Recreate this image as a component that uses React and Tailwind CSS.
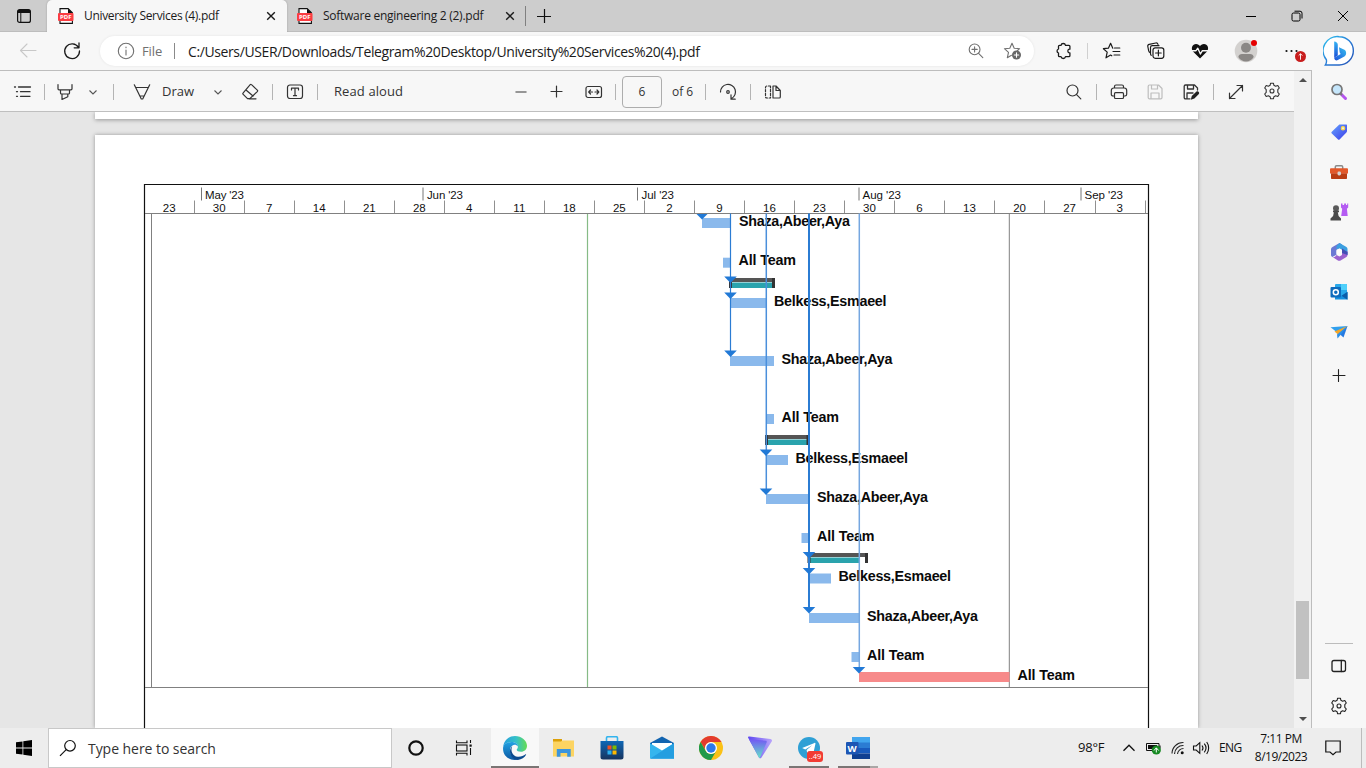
import React from "react";

const UI = "font-['Open_Sans','Noto_Sans',sans-serif]";

/* 20-unit line icon */
function I({ children, className = "", w = 1.1, fill = "none" }) {
  return (
    <svg viewBox="0 0 20 20" className={"h-5 w-5 shrink-0 " + className} fill={fill} stroke="currentColor" strokeWidth={w} strokeLinecap="round" strokeLinejoin="round">
      {children}
    </svg>
  );
}

function Sep({ className = "" }) {
  return <div className={"h-4 w-px shrink-0 bg-[#b4b4b4] " + className} />;
}

function Chevron({ className = "" }) {
  return (
    <svg viewBox="0 0 12 12" className={"h-3 w-3 shrink-0 text-[#555] " + className} fill="none" stroke="currentColor" strokeWidth="1.1">
      <path d="M2.5 4.5 6 8l3.500-3.500" />
    </svg>
  );
}

function PdfIcon({ className = "" }) {
  return (
    <svg viewBox="0 0 16 16" className={"h-4 w-4 shrink-0 " + className}>
      <path d="M2 .6h8.200L14.400 4.800v10.600H2z" fill="#fff" stroke="#111" strokeWidth="1.1" />
      <path d="M10 .5v4.500h4.500z" fill="#111" />
      <rect x="0" y="5" width="15.500" height="8" rx="1" fill="#fb3d42" />
      <text x="7.800" y="11.300" textAnchor="middle" fill="#fff" fontSize="6" fontWeight="700" fontFamily="Open Sans, sans-serif" textLength="11.500">PDF</text>
    </svg>
  );
}

function Cross({ className = "" }) {
  return (
    <svg viewBox="0 0 10 10" className={"h-[10px] w-[10px] shrink-0 " + className} fill="none" stroke="#1a1a1a" strokeWidth="1.4">
      <path d="m1.200 1.200 7.600 7.600m0-7.600L1.200 8.800" />
    </svg>
  );
}

function Gear({ className = "" }) {
  return (
    <I className={className}>
      <circle cx="10" cy="10" r="2" />
      <path d="M8.600 2.200h2.800l.5 2.100 1.700.9 2.200-.7 1.500 2.500-1.500 1.700v2.600l1.500 1.700-1.500 2.500-2.200-.7-1.700.9-.5 2.100H8.600l-.5-2.100-1.700-.9-2.200.7L2.700 13l1.500-1.700V8.700L2.700 7l1.500-2.500 2.200.7 1.700-.9z" />
    </I>
  );
}

function TabStrip() {
  return (
    <div className="flex h-8 shrink-0 items-center bg-[#cdcdcd] shadow-[inset_0_-1px_0_#bdbdbd]">
      <div className="flex w-[47px] justify-center">
        <svg viewBox="0 0 14 14" className="h-[14px] w-[14px]" fill="none" stroke="#111">
          <rect x=".6" y=".6" width="12.800" height="12.800" rx="2" strokeWidth="1.200" />
          <path d="M1 2.500h12" strokeWidth="3" />
          <path d="M3.800 4v9.400" />
        </svg>
      </div>
      <div className="flex h-8 w-[240px] items-center rounded-t-[5px] bg-[#f7f7f7] shadow-[0_0_2px_rgba(0,0,0,0.25)]">
        <PdfIcon className="ml-[11px]" />
        <span className="ml-[10px] w-[170px] whitespace-nowrap text-[12px] tracking-[-0.32px] text-[#1b1b1b]">University Services (4).pdf</span>
        <Cross className="ml-[12px]" />
      </div>
      <PdfIcon className="ml-[10px]" />
      <span className="ml-[10px] w-[172px] whitespace-nowrap text-[12px] tracking-[-0.26px] text-[#1b1b1b]">Software engineering 2 (2).pdf</span>
      <Cross className="ml-[10px]" />
      <div className="ml-[10px] h-5 w-px bg-[#808080]" />
      <svg viewBox="0 0 14 14" className="ml-[11px] h-[14px] w-[14px]" stroke="#111" strokeWidth="1.200"><path d="M7.500 0v14M0 7.500h14" /></svg>
      <div className="ml-auto mr-[17px] flex items-center gap-[34px]">
        <svg viewBox="0 0 12 12" className="h-3 w-3" stroke="#000"><path d="M1 6.500h10" /></svg>
        <svg viewBox="0 0 12 12" className="h-3 w-3" fill="none" stroke="#000"><rect x="1" y="3" width="8" height="8" rx="1.500" /><path d="M3.500 1.200h5.500a2 2 0 0 1 2 2v5.300" /></svg>
        <svg viewBox="0 0 12 12" className="h-3 w-3" stroke="#000"><path d="m1 1 10 10M11 1 1 11" /></svg>
      </div>
    </div>
  );
}

function BingIcon({ className = "" }) {
  return (
    <svg viewBox="0 0 32 32" className={"h-8 w-8 shrink-0 " + className}>
      <defs>
        <linearGradient id="bo" x1="0" y1="0" x2="1" y2="1"><stop offset="0" stopColor="#2cc3ee" /><stop offset=".5" stopColor="#2a7fd8" /><stop offset="1" stopColor="#2450b4" /></linearGradient>
        <linearGradient id="bb" x1="0" y1="0" x2="0" y2="1"><stop offset="0" stopColor="#35b4f4" /><stop offset="1" stopColor="#1b4fd6" /></linearGradient>
        <linearGradient id="bc" x1="0" y1="1" x2="1" y2="0"><stop offset="0" stopColor="#1f52da" /><stop offset="1" stopColor="#35c0f0" /></linearGradient>
      </defs>
      <path d="M16.200 1.700a14 14 0 1 1 0 28.300H2.400c1-1.400 1.300-3.200 1-5.200A14.200 14.200 0 0 1 16.200 1.700z" fill="#fff" stroke="url(#bo)" strokeWidth="1.400" />
      <path d="m16 12.200 5.400 2.500c2.200 1 2.500 5.200 0 6.700l-6.600 3.700c-1.700.9-3.600-.4-3.600-2.400l6.500-3.700-1-1.500z" fill="url(#bc)" />
      <path d="M11.200 6.500c1.900 0 3.600 1.300 3.600 3.500v10.500l-3.600 2.200z" fill="url(#bb)" />
    </svg>
  );
}

function AddressRow() {
  return (
    <div className="flex h-[38px] shrink-0 items-center bg-[#f7f7f7] text-[#1b1b1b]">
      <I className="ml-[18px] text-[#c8c8c8]"><path d="M18 9.500H2.500M9 3 2.500 9.500 9 16" /></I>
      <I className="ml-6" w={1.300}><path d="M16.500 6.500A7.400 7.400 0 1 0 17.500 10M17 2v4.800h-4.800" /></I>
      <div className="ml-[18px] flex h-[30px] w-[934px] items-center rounded-full bg-white shadow-[0_0_3px_rgba(0,0,0,0.08)]">
        <I className="ml-4 text-[#707070]"><circle cx="10" cy="10" r="7.700" /><path d="M10 9v5M10 6.100v.6" /></I>
        <span className="ml-[6px] w-[26px] pt-px text-[13px] tracking-[-0.1px] text-[#707070]">File</span>
        <div className="ml-[6px] h-4 w-px bg-[#8a8a8a]" />
        <span className="ml-[13px] whitespace-nowrap text-[14px] tracking-[-0.39px]">C:/Users/USER/Downloads/Telegram%20Desktop/University%20Services%20(4).pdf</span>
        <I className="ml-auto text-[#707070]"><circle cx="8.600" cy="8.400" r="5.400" /><path d="m12.600 12.400 4.200 4.200M6 8.400h5.200M8.600 5.800V11" /></I>
        <I className="ml-4 mr-3 text-[#707070]">
          <path d="m10 2.200 2.200 5 5.400.5-4 3.600M10 2.200l-2.200 5-5.400.5 4.100 3.600-1.200 5.500 4.200-2.500" />
          <circle cx="14.500" cy="14" r="4.500" fill="#666" stroke="none" /><path d="M14.500 11.800v4.400M12.300 14h4.400" stroke="#fff" />
        </I>
      </div>
      <I className="ml-5" w={1.300}><path d="M7 4.300a2.300 2.300 0 0 1 4.500 0h3.400c.6 0 1 .4 1 1v2.900c-1.600-.1-2 .8-2 1.800s.4 1.900 2 1.800v2.900c0 .6-.4 1-1 1h-3.400a2.300 2.300 0 0 1-4.500 0H5.500c-.6 0-1-.4-1-1V12a2.100 2.100 0 0 1 0-4V5.300c0-.6.4-1 1-1z" /></I>
      <Sep className="ml-[13px] bg-[#d0d0d0]" />
      <I className="ml-[14px]" w={1.200}><path d="M10.800 7.200 8.600 2.300 6.400 7.200l-5 .5 3.800 3.400L4 16.800l4.600-2.700 1.200.7M12.500 7h5.300M11 10.500h6.800M12 14h5.800" /></I>
      <I className="ml-6" w={1.200}><path d="M4.300 11.700c-1-.3-1.400-1-1.600-1.800L1.800 5.500c-.2-1 .3-2 1.400-2.200L9.800 2c1-.2 1.900.4 2.200 1.400M5.200 14.300c-.5-.5-.7-1-.7-1.600V6.500c0-1.100.7-1.800 1.800-1.800H13" /><rect x="7" y="6.800" width="10.800" height="10.500" rx="2.200" fill="#f7f7f7" /><path d="M12.400 9.200v5.600M9.600 12h5.600" /></I>
      <I className="ml-6" w={1.200}><path d="M10 17.500 3 10.500C.5 7.300 2.500 3 6 3c2 0 3.200 1 4 2.200C10.800 4 12 3 14 3c3.500 0 5.500 4.300 3 7.500z" fill="#111" stroke="none" /><path d="M1 9.700h5l1.800-2.500 2.600 5.800 2-3.300H19" stroke="#f7f7f7" strokeWidth="1.400" /></I>
      <div className="relative ml-6 h-6 w-6">
        <svg viewBox="0 0 24 24" className="h-6 w-6"><circle cx="12" cy="12" r="11.300" fill="#d3d1cf" /><circle cx="12" cy="8.700" r="5" fill="#8a8785" /><path d="M4.300 18c.3-1.800 1.700-3 3.700-3h8c2 0 3.400 1.200 3.700 3-1.700 2.800-4.500 4.500-7.700 4.500S6 20.800 4.300 18z" fill="#8a8785" /></svg>
        <div className="absolute left-[17px] top-[1px] h-[6px] w-[6px] rounded-full bg-[#e50000]" />
      </div>
      <div className="relative ml-6 h-6 w-6">
        <svg viewBox="0 0 24 24" className="h-6 w-6" fill="#111"><circle cx="4.500" cy="12" r="1.100" /><circle cx="9.500" cy="12" r="1.100" /><circle cx="14.500" cy="12" r="1.100" /></svg>
        <svg viewBox="0 0 12 12" className="absolute left-[13px] top-[12px] h-[11px] w-[11px]"><circle cx="6" cy="6" r="6" fill="#c81e1e" /><path d="M6 9.500V3M4 5l2-2 2 2" stroke="#fff" fill="none" /></svg>
      </div>
      <BingIcon className="ml-[17px]" />
    </div>
  );
}

function PdfToolbar() {
  return (
    <div className="flex h-[41px] shrink-0 items-center border-b border-[#bfbfbf] bg-[#f7f7f7] pt-px text-[#333]">
      <I className="ml-3" w={1.300}><path d="M6.500 5h12M8.500 9.700h9.500M8.500 14.300h9.500M2.500 5h1M4.500 9.700h1M4.500 14.300h1" /></I>
      <Sep className="ml-3" />
      <I className="ml-[10px]" w={1.200}><path d="M3 2.500v4.300c0 .7.400 1 1 1h12c.6 0 1-.300 1-1V2.500M5.500 8v3c0 .7.400 1 1 1h7c.6 0 1-.300 1-1V8M7 12v5.500l5.800-2.800V12" /></I>
      <Chevron className="ml-3" />
      <Sep className="ml-[14px]" />
      <I className="ml-[18px]" w={1.200}><path d="m2.300 2.800 7 14.200h1.400l7-14.200M3.800 5.500h12.400M8 14h4" /></I>
      <span className="ml-[10px] w-10 text-[13px]">Draw</span>
      <Chevron className="ml-[10px]" />
      <I className="ml-4" w={1.200}><path d="m11.500 2.600 5.800 5.500c.5.500.5 1 0 1.500l-7.500 7H7.500l-4.300-4.200c-.5-.5-.5-1 0-1.500l7-8.300c.4-.4.9-.4 1.300 0zM6 8l7 6M9 16.800h7" /></I>
      <Sep className="ml-3" />
      <I className="ml-3" w={1.200}><rect x="2.500" y="3" width="15" height="13.500" rx="2.500" /><path d="M6.500 8V6.200h7V8M10 6.200v7.500M8.500 13.700h3" /></I>
      <Sep className="ml-3" />
      <span className="ml-4 w-20 whitespace-nowrap text-[13px] tracking-[0.1px]">Read aloud</span>
      <I className="ml-[97px] text-[#777]" w={1.500}><path d="M5 10h10" /></I>
      <I className="ml-[15px]" w={1.200}><path d="M5 9.500h11M10.500 4v11" /></I>
      <I className="ml-[18px]" w={1.200}><rect x="2" y="4.500" width="15.500" height="11" rx="2" /><path d="M5 10h3.500M11 10h3.500M6.500 8 4.700 10l1.800 2M13 8l1.800 2-1.800 2" /></I>
      <Sep className="ml-[11px]" />
      <div className="ml-[6px] flex h-8 w-10 items-center justify-center rounded-sm border border-[#adadad] text-[12px]">6</div>
      <span className="ml-[10px] w-6 whitespace-nowrap text-[12px]">of 6</span>
      <Sep className="ml-[9px]" />
      <I className="ml-3" w={1.200}><circle cx="10" cy="10" r="1.300" /><path d="M2.500 10A7.500 7.500 0 1 1 13.500 16.500M13 12.800v4.400h4.200" /></I>
      <Sep className="ml-3" />
      <I className="ml-3" w={1.200}><path d="M10 4v12h6.300c.6 0 1-.4 1-1V8.500L13 4zM13 4v4.500h4.300" /><path d="M7.500 4H4c-1 0-1.500.5-1.500 1.500v9c0 1 .5 1.500 1.500 1.500h3.500z" strokeDasharray="2.200 1.600" /></I>
      <I className="ml-[281px]" w={1.200}><circle cx="8.500" cy="8.500" r="5.500" /><path d="m12.600 12.600 4.200 4.200" /></I>
      <Sep className="ml-3" />
      <I className="ml-3" w={1.200}><path d="M5.500 6V4.500c0-1 .5-1.500 1.500-1.500h6c1 0 1.500.5 1.500 1.500V6M5.500 14H4c-1 0-1.700-.7-1.700-1.700V8.500C2.300 7 3.300 6 4.800 6h10.400c1.500 0 2.500 1 2.500 2.500v3.800c0 1-.7 1.700-1.700 1.700h-1.500" /><rect x="5.500" y="10.700" width="9" height="5.800" rx="1" /></I>
      <I className="ml-4 text-[#bdbdbd]" w={1.200}><path d="M4.500 3h9l3.500 3.500v9c0 .8-.5 1.300-1.300 1.300H4.500c-.8 0-1.300-.5-1.300-1.300V4.300C3.200 3.500 3.700 3 4.500 3zM6.500 3v4h6V3M6 16.800V11h8v5.800" /></I>
      <I className="ml-4" w={1.300}><path d="M9 16.800H4.500c-.8 0-1.300-.5-1.300-1.300V4.300C3.200 3.500 3.700 3 4.500 3h9L16.500 6v2M6.500 3v4h6V3M6 16.800V11h6" /><path d="m9.800 17.700 1-3.700 4.700-4.500c1.500-1 3.400.9 2.400 2.400L13.400 16.500z" fill="#222" stroke="none" /></I>
      <Sep className="ml-3" />
      <I className="ml-3" w={1.200}><path d="M3.500 16.500 16.500 3.500M11 3.500h5.500V9M3.500 11v5.500H9" /></I>
      <Gear className="-mt-[2px] ml-4" />
    </div>
  );
}

const weeks = ["23", "30", "7", "14", "21", "28", "4", "11", "18", "25", "2", "9", "16", "23", "30", "6", "13", "20", "27", "3"];
const months = [[201.5, "May '23", 205, 39], [423, "Jun '23", 427, 36], [637.5, "Jul '23", 641.5, 32.5], [859, "Aug '23", 862.5, 38.5], [1081, "Sep '23", 1084.5, 38.5]];
const bars = [
  [702, 731, 218, "Shaza,Abeer,Aya", 739, 226],
  [723, 731, 257.7, "All Team", 738.5, 265],
  [731, 766, 298, "Belkess,Esmaeel", 774, 306],
  [730, 774, 356, "Shaza,Abeer,Aya", 781.5, 364],
  [766, 774, 414, "All Team", 781.5, 422],
  [766, 788, 455, "Belkess,Esmaeel", 795.5, 463],
  [766, 809, 494, "Shaza,Abeer,Aya", 817, 502],
  [801.500, 809, 533, "All Team", 817, 541],
  [809, 831, 573.5, "Belkess,Esmaeel", 838.5, 581],
  [809, 859.5, 613, "Shaza,Abeer,Aya", 867, 621],
  [851.5, 859.5, 652, "All Team", 867, 660],
  [859, 1009.5, 672, "All Team", 1017.5, 680],
];
const widths = { "Shaza,Abeer,Aya": 111, "All Team": 57.5, "Belkess,Esmaeel": 112.5 };
const summaries = [[730, 774.500, 774, 278], [766, 809, 809, 435], [808.500, 867.500, 859.5, 553]];
const arrows = [[702, 213], [730.500, 276.500], [730.500, 292.500], [730.500, 350.500], [766, 449.500], [766, 488.500], [809, 552], [809, 568], [809, 607], [859, 667]];

function Gantt() {
  return (
    <svg viewBox="95 135 1103 593" className="block h-[593px] w-[1103px]" fontFamily="Liberation Sans, Arial, sans-serif">
      <path d="M144.500 740V184.500H1148.500V740" fill="none" stroke="#111" strokeWidth="1.200" />
      <g stroke="#777" strokeWidth="1">
        <path d="M145 213.500H1148M145 687.500H1148M151.500 213V687M1009.300 213V687" stroke="#808080" />
        <path d="M587.500 214V687" stroke="#86bb86" strokeWidth="1.200" />
        {weeks.map((_, i) => <path key={i} d={`M${Math.floor(194.3 + i * 50.04) + 0.5} 200.500V213`} stroke="#909090" />)}
        {months.map(([x]) => <path key={x} d={`M${x} 187.500V200.500`} />)}
      </g>
      <g fontSize="11.500" fill="#111">
        {weeks.map((w, i) => <text key={i} x={169.200 + i * 50.02} y="212" textAnchor="middle">{w}</text>)}
        {months.map(([x, t, tx, len]) => <text key={x} x={tx} y="199" textLength={len}>{t}</text>)}
      </g>
      {bars.map(([a, b, y, t, tx, ty], i) => (
        <g key={i}>
          <rect x={a} y={y} width={b - a} height="10" fill={i === 11 ? "#f78a8a" : "#8ab9ec"} />
          <text x={tx} y={ty} fontSize="14.300" fontWeight="700" fill="#0a0a0a" textLength={widths[t]}>{t}</text>
        </g>
      ))}
      {summaries.map(([a, b, c, y]) => (
        <g key={y}>
          <rect x={a} y={y} width={b - a} height="4" fill="#555" />
          <rect x={a} y={y + 4.500} width={c - a} height="5.500" fill="#2aa3ad" />
          <rect x={a - 1} y={y} width="3" height="10" fill="#333" />
          <rect x={b - 2.500} y={y} width="3" height="10" fill="#333" />
        </g>
      ))}
      <path d="M730.500 213.500V352" stroke="#2b7cd3" strokeWidth="1.200" />
      <path d="M766.300 213.500V490" stroke="#4a8fdb" strokeWidth="1.500" />
      <path d="M809 213.500V609" stroke="#2b7cd3" strokeWidth="2" />
      <path d="M859.300 213.500V668" stroke="#76a7e0" strokeWidth="1.500" />
      {arrows.map(([x, y], i) => <path key={i} d={i === 0 ? "M696.500 214h11l-5.500 5.500z" : `M${x - 6.300} ${y}h12.600l-6.300 6.500z`} fill="#2179d6" />)}
    </svg>
  );
}

function Viewer() {
  return (
    <div className="flex min-w-0 flex-1 flex-col">
      <PdfToolbar />
      <div className="flex flex-1 flex-col items-start overflow-hidden bg-[#e6e6e6]">
        <div className="ml-[95px] h-[7px] w-[1103px] shrink-0 bg-white shadow-[0_1px_4px_rgba(0,0,0,0.35)]" />
        <div className="ml-[95px] mt-4 h-[593px] w-[1103px] shrink-0 bg-white shadow-[0_0_4px_rgba(0,0,0,0.35)]"><Gantt /></div>
      </div>
    </div>
  );
}

function ScrollBar() {
  return (
    <div className="flex w-[18px] shrink-0 flex-col items-center border-r border-[#bdbdbd] bg-[#f1f1f1]">
      <svg viewBox="0 0 8 4" className="mt-[7px] h-1 w-2"><path d="M0 4 4 0l4 4z" fill="#4f4f4f" /></svg>
      <div className="mt-[519px] h-[78px] w-[13px] bg-[#c1c1c1]" />
      <svg viewBox="0 0 8 4" className="mt-[38px] h-1 w-2"><path d="M0 0l4 4 4-4z" fill="#4f4f4f" /></svg>
    </div>
  );
}

function SideBar() {
  return (
    <div className="flex w-[54px] shrink-0 flex-col items-center bg-[#f7f7f7] pt-[12px] text-[#222]">
      <div className="flex flex-col gap-5">
        <svg viewBox="0 0 20 20" className="h-5 w-5"><path d="m11.500 11.500 5 5" stroke="#b455ee" strokeWidth="3" strokeLinecap="round" /><path d="m11 11 2 2" stroke="#777" strokeWidth="2" /><circle cx="8" cy="7.500" r="5" fill="#c5e6fb" stroke="#777" strokeWidth="1.700" /></svg>
        <svg viewBox="0 0 20 20" className="h-5 w-5"><defs><linearGradient id="tg" x1="0" y1="0" x2="1" y2="1"><stop offset="0" stopColor="#65a3ff" /><stop offset="1" stopColor="#3c3ce8" /></linearGradient></defs><path d="M11 2.500h6c.8 0 1 .4 1 1V9c0 .6-.2 1-.6 1.400l-6.600 6.800c-.7.7-1.400.7-2 0l-6-5.700c-.6-.6-.6-1.200 0-1.800l7-6.700c.3-.4.700-.5 1.200-.5z" fill="url(#tg)" /><circle cx="14" cy="6.300" r="1.700" fill="#e8e8f4" stroke="#fbd740" strokeWidth="1.200" /></svg>
        <svg viewBox="0 0 20 20" className="h-5 w-5"><path d="M6.300 7V5c0-.8.4-1.300 1.200-1.300h5c.8 0 1.200.5 1.200 1.300v2" fill="none" stroke="#8a8a8a" strokeWidth="1.500" /><rect x="1" y="6.300" width="18" height="5.500" rx="1" fill="#e2582a" /><path d="M2 11.500h16V16c0 .7-.3 1-1 1H3c-.7 0-1-.3-1-1z" fill="#b93d14" /><rect x="8.500" y="9.500" width="3.500" height="4" rx="1.400" fill="#d4d4d4" /></svg>
        <svg viewBox="0 0 20 20" className="h-5 w-5"><path d="M12 1.500h1.500v1.400h1.600V1.500H17v1.400h1.200V1.500h1v4l-1.300 1.300.8 7.200h-6.500l1-7.200L12 5.500z" fill="#b45cf2" /><circle cx="7" cy="6.300" r="3" fill="#5a5a5a" /><path d="M4 8.500h6v1.700H8.800l.8 3.800 2.400 2.500v2H1.500v-2l2.600-2.500.8-3.800H4z" fill="#4a4a4a" /></svg>
        <svg viewBox="0 0 20 20" className="h-5 w-5"><path d="M10.500 1 3.500 5C2.500 5.600 2 6.400 2 7.500v5.300c0 1 .4 1.700 1.300 2.200l4.200-2.200V7.700L13 4.800V2.500z" fill="#6a78d4" /><path d="M10.500 1 17 4.700c1 .6 1.500 1.400 1.500 2.500v5.600l-5.500-2V7.700L10.300 6.200 7.500 7.500V4z" fill="#3b9fe0" /><path d="M18.500 9.500v3.300c0 1.100-.5 1.900-1.500 2.500l-5 3c-1.300.7-2.300.7-3.500 0l-5-3.200c2 .5 3-.5 4-2.100l3 1.500 2.500-1.500V8z" fill="#9b62cf" /><path d="M13 6.500 18.500 10v3L13 11z" fill="#4250b5" /><path d="m10.200 6.800 2.800 1.600v3.300l-2.800 1.500-2.700-1.500V8.400z" fill="#fbfbfb" /></svg>
        <svg viewBox="0 0 20 20" className="h-5 w-5"><rect x="6" y="2" width="12" height="12" rx="1" fill="#28a8ea" /><path d="M12 2h5c.6 0 1 .4 1 1v5h-6z" fill="#50d0fb" /><path d="M6 17.500V11l6 3 6.500-4v7.500z" fill="#1490df" /><path d="m18.500 9.700-6 4 6 4z" fill="#0b5ca9" /><rect x="1.500" y="5" width="10.500" height="10.500" rx="1" fill="#0f6cbd" /><circle cx="6.800" cy="10.200" r="2.500" fill="none" stroke="#fff" strokeWidth="1.500" /></svg>
        <svg viewBox="0 0 20 20" className="h-5 w-5"><path d="M1.500 5.200 18.500 4 9 11z" fill="#31a0ed" /><path d="M18.500 4 14.500 15.500l-5-4.500z" fill="#2579e1" /><path d="m18.500 4-13 5.500 3.500 3z" fill="#f4a62a" /><path d="m8 12.500.5 4 3-3.500 7-9z" fill="#2b8fe8" /></svg>
      </div>
      <I className="mt-[24px]"><path d="M4 9.500h12M9.500 3.500v12" /></I>
      <div className="mt-[257px] h-px w-7 shrink-0 bg-[#bcbcbc]" />
      <I className="mt-[12px]" w={1.300}><rect x="3" y="4.500" width="13.500" height="11" rx="2" /><path d="M12.300 4.500v11" /></I>
      <Gear className="mt-5" />
    </div>
  );
}

function TaskBar() {
  return (
    <div className="flex h-10 shrink-0 items-center bg-[#ededed] text-[#111] [&>*]:shrink-0">
      <svg viewBox="0 0 16 16" className="ml-4 h-4 w-4"><path d="M0 2.300 6.500 1.400v6.200H0zM7.300 1.300 16 0v7.600H7.300zM0 8.400h6.500v6.200L0 13.700zM7.300 8.400H16V16l-8.700-1.200z" /></svg>
      <div className="ml-4 flex h-10 w-[344px] items-center border border-[#c8c8c8] bg-white">
        <svg viewBox="0 0 18 18" className="ml-[10px] h-[18px] w-[18px]" fill="none" stroke="#111" strokeWidth="1.200"><circle cx="11" cy="6.800" r="5.300" /><path d="M7.200 10.600 1 16.800" /></svg>
        <span className="ml-[11px] whitespace-nowrap text-[14px] tracking-[-0.05px] text-[#333]">Type here to search</span>
      </div>
      <svg viewBox="0 0 16 16" className="ml-4 h-4 w-4"><circle cx="8" cy="8" r="6.700" fill="none" stroke="#111" strokeWidth="2.200" /></svg>
      <svg viewBox="0 0 18 18" className="ml-[31px] h-[18px] w-[18px]" fill="none" stroke="#111" strokeWidth="1.100"><path d="M1.500 1.500v2.300h10.500V1.500M1.500 16.500v-2.300h10.500v2.300M15.500 1v3M15.500 9v7" /><rect x="1.500" y="6" width="10.500" height="6" /><rect x="14.500" y="5.500" width="2.200" height="2.200" fill="#111" stroke="none" /></svg>
      <div className="ml-[18px] flex h-10 w-12 items-center justify-center border-b-2 border-[#7a7574] bg-[#f8f8f8] pt-[2px]">
        <svg viewBox="0 0 24 24" className="h-6 w-6">
          <defs>
            <linearGradient id="e1" x1="0" y1="0" x2="1" y2="0"><stop offset="0" stopColor="#279fdc" /><stop offset=".55" stopColor="#35c1c8" /><stop offset="1" stopColor="#66dc52" /></linearGradient>
            <linearGradient id="e2" x1="0" y1="0" x2="0" y2="1"><stop offset="0" stopColor="#23a2e2" /><stop offset="1" stopColor="#0c59a4" /></linearGradient>
          </defs>
          <path d="M.2 11C.7 5 5.500 0 12 0s12 4.700 12 9.800c0 3.700-2.700 6-6 6-2.800 0-4.300-1-4.300-2 0-.8 1.200-1.200 1.200-3.300C14.900 8 12 6 8.500 6 4.200 6 1 8.500.2 11z" fill="url(#e1)" />
          <path d="M.1 11.500C.6 8.300 4 6 8.500 6c3.500 0 6.400 2 6.400 4.500C14 9 12.500 8.600 11.500 8.700 8.500 9 6.800 12 7 15c.3 4.400 3.500 7.800 8 8.500C7 25.500-.7 20 .1 11.500z" fill="url(#e2)" />
          <path d="M9.200 10.200C7.300 14 9 20.300 15 20.800c3 .2 5.500-1 7.600-2.500.4-.200.7.100.5.500C21.500 21.600 18.500 23.500 15 24 9.500 23.800 6.800 19 7 15c.2-2.200 1-3.800 2.200-4.800z" fill="#0b4a8f" />
        </svg>
      </div>
      <svg viewBox="0 0 22 20" className="ml-[14px] h-5 w-[22px]"><path d="M0 1h9v4H0z" fill="#dca008" /><path d="M0 3.500h8l1.500-1H21v16H0z" fill="#fcd462" /><path d="M3.800 18.800V11h13.900v7.800h-3.500V15H7.500v3.800z" fill="#3b95dd" /></svg>
      <svg viewBox="0 0 24 24" className="ml-[25px] h-6 w-6"><defs><linearGradient id="st" x1="0" y1="0" x2="0" y2="1"><stop offset="0" stopColor="#0f67b5" /><stop offset="1" stopColor="#17345f" /></linearGradient></defs><path d="M6.500 6V2c0-.8.5-1.300 1.300-1.300h8.400c.8 0 1.300.500 1.300 1.300v4" fill="none" stroke="#33b4ee" strokeWidth="1.600" /><path d="M.5 5h23v16c0 1.700-.8 2.500-2.500 2.500H3C1.300 23.500.5 22.700.5 21z" fill="url(#st)" /><path d="M7.500 9.500h4v4h-4z" fill="#f25022" /><path d="M12.500 9.500h4v4h-4z" fill="#7fba00" /><path d="M7.500 14.500h4v4h-4z" fill="#2bafee" /><path d="M12.500 14.500h4v4h-4z" fill="#ffb900" /></svg>
      <svg viewBox="0 0 24 24" className="ml-[26px] h-6 w-6"><path d="M0 7 12 .5 24 7v8H0z" fill="#1264b0" /><path d="M2 7h20v8H2z" fill="#fff" /><path d="M0 7.200 12 14.500V22.500H0zM24 7.200 12 14.500V22.500h12z" fill="#35b5ee" /><path d="M0 22.700 24 7.200v15.500z" fill="#249ee0" /></svg>
      <svg viewBox="0 0 24 24" className="ml-[25px] h-6 w-6"><circle cx="12" cy="12" r="12" fill="#fbc116" /><path d="M1.600 6A12 12 0 0 1 22.400 6H12a6 6 0 0 0-5.500 8z" fill="#e33b2e" /><path d="M1.600 6A12 12 0 0 0 12 24l5.200-9a6 6 0 0 1-10.400 0z" fill="#229a4b" /><circle cx="12" cy="12" r="6" fill="#fff" /><circle cx="12" cy="12" r="4.700" fill="#2f79ea" /></svg>
      <svg viewBox="0 0 24 24" className="ml-[25px] h-6 w-6"><defs><linearGradient id="pv" x1="0" y1="0" x2="1" y2="0"><stop offset="0" stopColor="#5d47f0" /><stop offset="1" stopColor="#b9a5fb" /></linearGradient><linearGradient id="pw" x1="0" y1="0" x2="0" y2="1"><stop offset="0" stopColor="#7357f4" /><stop offset="1" stopColor="#64e3c8" /></linearGradient></defs><path d="M0 1.500c0-.8.7-1 1.500-.9l21 2.300c1.400.2 1.900 1.500 1.200 2.700L13.500 21.500c-.8 1.200-2 1.100-2.600-.1z" fill="url(#pv)" /><path d="m1 3.200 16.500 1.500c1.200.1 1.600 1 1 2L12 21.500c-.5.5-1 .2-1.200-.3z" fill="url(#pw)" /></svg>
      <div className="relative ml-[17px] flex h-10 w-10 items-center justify-center border-b-2 border-[#7a7574] pt-[2px]">
        <svg viewBox="0 0 24 24" className="h-[22px] w-[22px]"><circle cx="12" cy="12" r="12" fill="#2fa0d5" /><path d="m4.500 12 13.500-5.500c.8-.3 1.200.1 1 1l-2.200 10c-.2.8-.7.900-1.300.5L12 15.500l-2 2-.6-3.300 6-5.200-7.500 4.500z" fill="#fff" /></svg>
        <div className="absolute left-[18px] top-[23px] flex h-[11px] w-4 items-center justify-center rounded-[3px] bg-[#f23c34] text-[7.500px] leading-none text-white">..49</div>
      </div>
      <div className="ml-[9px] flex h-10 w-8 items-center justify-center border-b-2 border-[#7a7574] pl-[7px] pt-[2px]">
        <svg viewBox="0 0 24 22" className="h-[22px] w-6 shrink-0"><path d="M6 0h18v6H6z" fill="#41a5ee" /><path d="M6 5.500h18V11H6z" fill="#2b7cd3" /><path d="M6 11h18v5.500H6z" fill="#185abd" /><path d="M6 16.500h18V22H6z" fill="#103f91" /><rect x="0" y="5" width="12.500" height="12.500" rx="1" fill="#1d56b4" /><text x="6.200" y="14.700" textAnchor="middle" fontSize="9.500" fontWeight="700" fill="#fff" fontFamily="Open Sans, sans-serif">W</text></svg>
      </div>
      <div className="h-10 w-2 border-b-2 border-[#aaa7a6]" />
      <span className="ml-[200px] w-10 whitespace-nowrap text-[13px] tracking-[-0.2px]">98°F</span>
      <svg viewBox="0 0 14 14" className="ml-[4px] h-[14px] w-[14px]" fill="none" stroke="#111" strokeWidth="1.300"><path d="m1.500 9.700 5.500-5.500 5.500 5.500" /></svg>
      <svg viewBox="0 0 18 14" className="ml-[9px] h-[14px] w-[18px]"><path d="M1.500 2.500h12.500v7H1.500z" fill="none" stroke="#111" /><path d="M3 4h9v4H3z" fill="#111" /><path d="M14.500 4.500h1v3h-1z" /><circle cx="11.300" cy="9" r="4.600" fill="#168a22" /><path d="m9 9.500 2.300-2.700 2.300 2.700M11.300 7v4.500" stroke="#fff" fill="none" /></svg>
      <svg viewBox="0 0 14 14" className="ml-[8px] h-[14px] w-[14px]" fill="none" stroke="#222" strokeWidth="1.100"><path d="M1 12.500A11 11 0 0 1 12.500 1.500M3.500 13A8.500 8.500 0 0 1 12.500 4.500M6.500 13a6 6 0 0 1 6-5.500" /><circle cx="11.200" cy="11.800" r="1.500" fill="#111" stroke="none" /></svg>
      <svg viewBox="0 0 18 16" className="ml-[7px] h-4 w-[18px]" fill="none" stroke="#111" strokeWidth="1.100"><path d="M1.500 6v4h2.700l3.600 3.300V2.700L4.200 6zM10 5.500c1.200 1.500 1.200 3.500 0 5M12.300 3.700c2 2.500 2 6.100 0 8.600M14.700 2c2.600 3.500 2.600 8.500 0 12" /></svg>
      <span className="ml-[9px] w-6 text-[12px] tracking-[-0.6px]">ENG</span>
      <div className="ml-[8px] flex w-[60px] flex-col items-center whitespace-nowrap text-[12px] leading-[18px] tracking-[-0.5px]"><span>7:11 PM</span><span>8/19/2023</span></div>
      <svg viewBox="0 0 16 16" className="ml-[14px] h-4 w-4" fill="none" stroke="#111" strokeWidth="1.200"><path d="M.8 1h14.400v11H11l-3 2.800L5 12H.8z" /></svg>
      <div className="ml-[20px] h-10 w-px bg-[#bcbcbc]" />
    </div>
  );
}

export default function App() {
  return (
    <div className={"flex h-[768px] w-[1366px] flex-col overflow-hidden bg-[#f7f7f7] " + UI}>
      <TabStrip />
      <AddressRow />
      <div className="flex h-[658px] shrink-0">
        <div className="flex min-w-0 flex-1 border-t border-[#bdbdbd]">
          <Viewer />
          <ScrollBar />
        </div>
        <SideBar />
      </div>
      <TaskBar />
    </div>
  );
}
